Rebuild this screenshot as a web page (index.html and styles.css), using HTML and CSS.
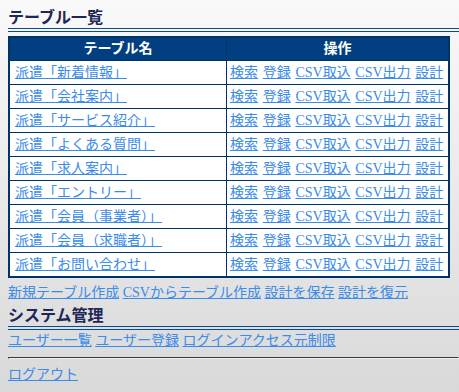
FILE: index.html
```html
<!DOCTYPE html>
<html lang="ja">
<head>
<meta charset="utf-8">
<title>テーブル一覧</title>
<link rel="stylesheet" href="styles.css">
</head>
<body>
<h2 class="heading">テーブル一覧</h2>
<table class="tables">
  <thead>
    <tr><th class="col-name">テーブル名</th><th class="col-ops">操作</th></tr>
  </thead>
  <tbody>
    <tr><td class="name"><a href="#">派遣「新着情報」</a></td><td class="ops"><a href="#">検索</a> <a href="#">登録</a> <a href="#">CSV取込</a> <a href="#">CSV出力</a> <a href="#">設計</a></td></tr>
    <tr><td class="name"><a href="#">派遣「会社案内」</a></td><td class="ops"><a href="#">検索</a> <a href="#">登録</a> <a href="#">CSV取込</a> <a href="#">CSV出力</a> <a href="#">設計</a></td></tr>
    <tr><td class="name"><a href="#">派遣「サービス紹介」</a></td><td class="ops"><a href="#">検索</a> <a href="#">登録</a> <a href="#">CSV取込</a> <a href="#">CSV出力</a> <a href="#">設計</a></td></tr>
    <tr><td class="name"><a href="#">派遣「よくある質問」</a></td><td class="ops"><a href="#">検索</a> <a href="#">登録</a> <a href="#">CSV取込</a> <a href="#">CSV出力</a> <a href="#">設計</a></td></tr>
    <tr><td class="name"><a href="#">派遣「求人案内」</a></td><td class="ops"><a href="#">検索</a> <a href="#">登録</a> <a href="#">CSV取込</a> <a href="#">CSV出力</a> <a href="#">設計</a></td></tr>
    <tr><td class="name"><a href="#">派遣「エントリー」</a></td><td class="ops"><a href="#">検索</a> <a href="#">登録</a> <a href="#">CSV取込</a> <a href="#">CSV出力</a> <a href="#">設計</a></td></tr>
    <tr><td class="name"><a href="#">派遣「会員（事業者）」</a></td><td class="ops"><a href="#">検索</a> <a href="#">登録</a> <a href="#">CSV取込</a> <a href="#">CSV出力</a> <a href="#">設計</a></td></tr>
    <tr><td class="name"><a href="#">派遣「会員（求職者）」</a></td><td class="ops"><a href="#">検索</a> <a href="#">登録</a> <a href="#">CSV取込</a> <a href="#">CSV出力</a> <a href="#">設計</a></td></tr>
    <tr><td class="name"><a href="#">派遣「お問い合わせ」</a></td><td class="ops"><a href="#">検索</a> <a href="#">登録</a> <a href="#">CSV取込</a> <a href="#">CSV出力</a> <a href="#">設計</a></td></tr>
  </tbody>
</table>
<p class="links links-after-table"><a href="#">新規テーブル作成</a> <a href="#">CSVからテーブル作成</a> <a href="#">設計を保存</a> <a href="#">設計を復元</a></p>
<h2 class="heading heading-system">システム管理</h2>
<p class="links links-system"><a href="#">ユーザー一覧</a> <a href="#">ユーザー登録</a> <a href="#">ログインアクセス元制限</a></p>
<hr class="rule">
<p class="links links-logout"><a href="#">ログアウト</a></p>
</body>
</html>
```

FILE: styles.css
```css
html {
  min-height: 100%;
  background: linear-gradient(to bottom, #f9f9f9 0%, #d9d9d9 100%);
}

body {
  margin: 0 0 0 8px;
  font-family: "Liberation Serif", "Noto Sans CJK JP", serif;
  font-size: 14px;
  color: #222;
}

a {
  color: #3b8beb;
  text-decoration: underline;
}

.heading {
  margin: 0;
  padding-top: 8px;
  font-size: 16px;
  line-height: 20px;
  font-weight: bold;
  color: #1f2658;
  border-bottom: 4px double #0a4a90;
}

.tables {
  margin-top: 4px;
  width: 442px;
  table-layout: fixed;
  border-collapse: separate;
  border-spacing: 0;
  border: 2px solid #003366;
  background: #fff;
}

.tables th,
.tables td {
  box-sizing: border-box;
  padding: 0;
  white-space: nowrap;
  vertical-align: middle;
}

.tables th {
  height: 22px;
  line-height: 22px;
  background: #023f80;
  color: #fff;
  font-weight: bold;
  text-align: center;
}

.tables .col-name {
  width: 217px;
  border-right: 1px solid #003366;
}

.tables td {
  height: 24px;
  line-height: 23px;
  border-top: 1px solid #003366;
}

.tables td.name {
  padding-left: 5px;
  border-right: 1px solid #003366;
}

.tables td.ops {
  padding-left: 3px;
  word-spacing: 1.2px;
}

.links {
  margin: 0;
  line-height: 18px;
}

.links-after-table {
  margin-top: 6px;
}

.heading-system {
  margin-top: 4px;
  padding-top: 0;
}

.links-system {
  margin-top: 2px;
}

.rule {
  margin: 7px 0 7px 0;
  border: 1px inset #eee;
  border-top-color: #8e8e8e;
  border-left-color: #8e8e8e;
  height: 0;
}
```
